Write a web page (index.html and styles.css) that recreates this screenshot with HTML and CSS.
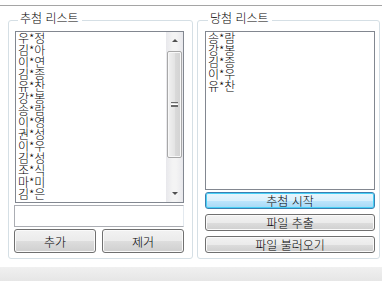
FILE: index.html
```html
<!DOCTYPE html>
<html lang="ko">

<head>
    <meta charset="UTF-8">
    <meta name="viewport" content="width=device-width, initial-scale=1.0">
    <title>추첨</title>
    <link rel="stylesheet" href="styles.css">
</head>

<body>
    <div class="window">
        <div class="content">

            <fieldset class="group group-pool">
                <legend>추첨 리스트</legend>
                <div class="listbox listbox-pool">
                    <ul class="items">
                        <li>우*정</li>
                        <li>김*아</li>
                        <li>이*연</li>
                        <li>김*종</li>
                        <li>유*찬</li>
                        <li>강*봉</li>
                        <li>송*람</li>
                        <li>이*영</li>
                        <li>권*성</li>
                        <li>이*우</li>
                        <li>김*성</li>
                        <li>조*식</li>
                        <li>마*미</li>
                        <li>김*은</li>
                    </ul>
                    <div class="scrollbar">
                        <div class="sb-arrow sb-up"></div>
                        <div class="sb-track">
                            <div class="sb-thumb"><span class="grip"></span></div>
                        </div>
                        <div class="sb-arrow sb-down"></div>
                    </div>
                </div>
                <input class="textbox" type="text">
                <div class="btn-row">
                    <button class="btn btn-half">추가</button>
                    <button class="btn btn-half">제거</button>
                </div>
            </fieldset>

            <fieldset class="group group-winners">
                <legend>당첨 리스트</legend>
                <div class="listbox listbox-winners">
                    <ul class="items">
                        <li>송*람</li>
                        <li>강*봉</li>
                        <li>김*종</li>
                        <li>이*우</li>
                        <li>유*찬</li>
                    </ul>
                </div>
                <div class="btn-stack">
                    <button class="btn btn-wide btn-default">추첨 시작</button>
                    <button class="btn btn-wide">파일 추출</button>
                    <button class="btn btn-wide">파일 불러오기</button>
                </div>
            </fieldset>

        </div>
        <div class="statusbar"></div>
    </div>
</body>

</html>
```

FILE: styles.css
```css
body {
    margin: 0;
    padding: 0;
    background: #FFF;
    font-family: "Noto Sans CJK KR", "Noto Sans", sans-serif;
    font-size: 12px;
    font-weight: 300;
    color: #000;
}

.window {
    width: 382px;
    height: 281px;
    padding-top: 5px;
    box-sizing: border-box;
    display: flex;
    flex-direction: column;
}

.content {
    border-top: 1px solid #A5A5A5;
    display: flex;
    gap: 4px;
    padding: 5px 2px 0 8px;
    height: 256px;
    box-sizing: border-box;
}

/* group boxes */
.group {
    margin: 0;
    border: 1px solid #D5DFE5;
    border-radius: 3px;
    box-sizing: border-box;
    height: 248px;
    display: flex;
    flex-direction: column;
}

.group legend {
    margin-left: 3px;
    padding: 0 3px 5px 2px;
    line-height: 14px;
    font-size: 12px;
}

.group-pool {
    width: 185px;
    padding: 1px 8px 5px 6px;
}

.group-winners {
    width: 183px;
    padding: 1px 4px 5px 7px;
}

/* list boxes */
.listbox {
    border: 1px solid #828790;
    background: #FFF;
    box-sizing: border-box;
    display: flex;
}

.listbox-pool {
    height: 173px;
}

.listbox-winners {
    height: 160px;
}

.items {
    list-style: none;
    margin: 0;
    padding: 0 0 0 2px;
    flex: 1;
}

.items li {
    line-height: 12px;
    height: 12px;
    white-space: nowrap;
}

/* scrollbar */
.scrollbar {
    width: 17px;
    display: flex;
    flex-direction: column;
    background: linear-gradient(to right, #E8E8EC, #F4F4F4 40%, #F4F4F4 60%, #E8E8EC);
}

.sb-arrow {
    height: 17px;
    display: flex;
    justify-content: center;
    align-items: center;
}

.sb-arrow::before {
    content: "";
    border-left: 3px solid transparent;
    border-right: 3px solid transparent;
}

.sb-up::before {
    border-bottom: 3px solid #505050;
}

.sb-down::before {
    border-top: 3px solid #505050;
}

.sb-track {
    flex: 1;
    padding: 2px 0 0;
}

.sb-thumb {
    height: 105px;
    margin: 0 1px;
    border: 1px solid #A8A8A8;
    border-radius: 2px;
    background: linear-gradient(to right, #F1F1F1, #E4E4E4 50%, #DADADA 51%, #D2D2D2);
    box-shadow: inset 0 0 0 1px #F8F8F8;
    display: flex;
    justify-content: center;
    align-items: center;
}

.grip {
    width: 7px;
    height: 5px;
    border-top: 1px solid #6A6A6A;
    border-bottom: 1px solid #6A6A6A;
    background: linear-gradient(#FFF 1px, #6A6A6A 1px, #6A6A6A 2px, #FFF 2px);
    background-position: 0 1px;
    background-repeat: no-repeat;
    box-sizing: border-box;
}

/* text box */
.textbox {
    margin: 2px 0 0 -1px;
    height: 22px;
    width: 170px;
    box-sizing: border-box;
    border: 1px solid #ABADB3;
    border-right-color: #E3E9EF;
    padding: 0 2px;
    font: inherit;
    outline: none;
}

/* buttons */
.btn {
    font-family: inherit;
    font-size: 12px;
    font-weight: 300;
    color: #000;
    padding: 0;
    border: 1px solid #707070;
    border-radius: 3px;
    background: linear-gradient(#F2F2F2 0%, #EBEBEB 50%, #DDDDDD 51%, #CFCFCF 100%);
    box-shadow: inset 0 0 0 1px #FAFAFA;
    box-sizing: border-box;
}

.btn-row {
    display: flex;
    justify-content: space-between;
    margin: 2px 0 0 -1px;
    width: 170px;
}

.btn-half {
    width: 82px;
    height: 24px;
}

.btn-stack {
    display: flex;
    flex-direction: column;
    gap: 5px;
    margin-top: 2px;
}

.btn-wide {
    width: 170px;
    height: 17px;
    line-height: 14px;
}

.btn-default {
    border-color: #3C7FB1;
    background: linear-gradient(#EAF6FD 0%, #D9F0FC 50%, #BEE6FD 51%, #A7D9F5 100%);
    box-shadow: inset 0 0 0 1px #48D1F6;
}

.statusbar {
    margin-top: 6px;
    flex: 1;
    background: linear-gradient(#F0F0F0, #E6E6E6);
}
```
